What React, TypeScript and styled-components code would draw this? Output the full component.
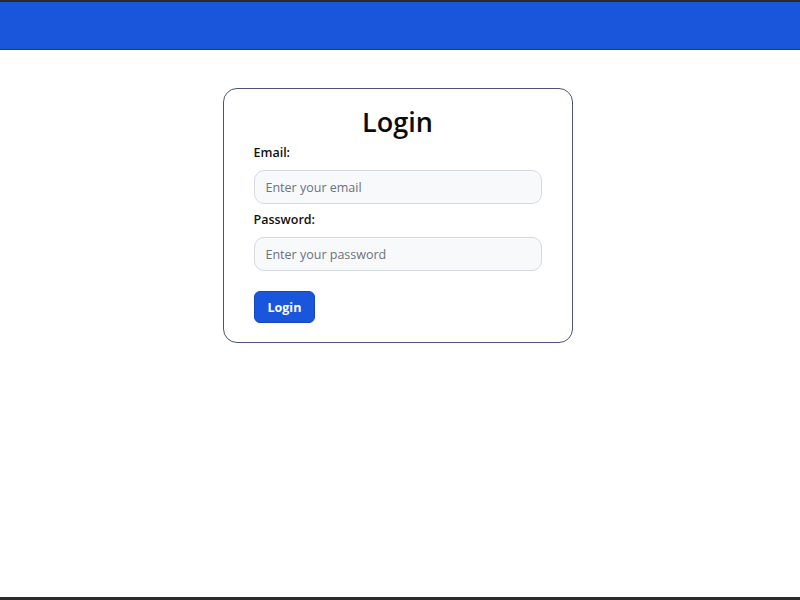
import styled, { createGlobalStyle } from "styled-components";

const GlobalStyle = createGlobalStyle`
  * {
    box-sizing: border-box;
  }
  html, body {
    margin: 0;
    padding: 0;
    height: 100%;
  }
  body {
    font-family: "Open Sans", "Noto Sans", sans-serif;
    background: #ffffff;
    color: #111111;
  }
  #root {
    height: 100%;
  }
`;

const Page = styled.div`
  display: flex;
  flex-direction: column;
  height: 600px;
  border-top: 2px solid #2b2b2b;
  border-bottom: 3px solid #2b2b2b;
`;

const Header = styled.header`
  height: 48px;
  flex-shrink: 0;
  background: #1a56db;
  border-bottom: 1px solid #3a3a3a;
`;

const Main = styled.main`
  flex: 1;
  display: flex;
  justify-content: center;
  align-items: flex-start;
  padding: 38px 5px 0 0;
`;

const Card = styled.form`
  width: 350px;
  padding: 15px 30px 19px;
  border: 1.5px solid #4b5576;
  border-radius: 14px;
  background: #ffffff;
  display: flex;
  flex-direction: column;
`;

const Title = styled.h2`
  margin: 0 0 4px;
  text-align: center;
  font-size: 27px;
  line-height: 36px;
  font-weight: 600;
  color: #0b0b0b;
`;

const Label = styled.label`
  display: block;
  font-size: 12.5px;
  line-height: 18px;
  font-weight: 600;
  color: #111111;
  margin-bottom: 8px;
`;

const Input = styled.input`
  width: 100%;
  height: 34px;
  padding: 0 11px;
  border: 1px solid #d5d9e0;
  border-radius: 10px;
  background: #f8f9fb;
  font-family: inherit;
  font-size: 12.5px;
  color: #222;
  outline: none;
  &::placeholder {
    color: #6b7280;
  }
`;

const Field = styled.div<{ $gap: number }>`
  margin-bottom: ${(p) => p.$gap}px;
`;

const SubmitButton = styled.button`
  align-self: flex-start;
  height: 32px;
  padding: 0 13px;
  border: 1px solid #1747c0;
  border-radius: 6px;
  background: #1a56db;
  color: #ffffff;
  font-family: inherit;
  font-size: 12.5px;
  font-weight: 700;
  cursor: pointer;
`;

export default function App() {
  return (
    <>
      <GlobalStyle />
      <Page>
        <Header />
        <Main>
          <Card onSubmit={(e) => e.preventDefault()}>
            <Title>Login</Title>
            <Field $gap={7}>
              <Label htmlFor="email">Email:</Label>
              <Input id="email" type="email" placeholder="Enter your email" />
            </Field>
            <Field $gap={20}>
              <Label htmlFor="password">Password:</Label>
              <Input id="password" type="password" placeholder="Enter your password" />
            </Field>
            <SubmitButton type="submit">Login</SubmitButton>
          </Card>
        </Main>
      </Page>
    </>
  );
}
